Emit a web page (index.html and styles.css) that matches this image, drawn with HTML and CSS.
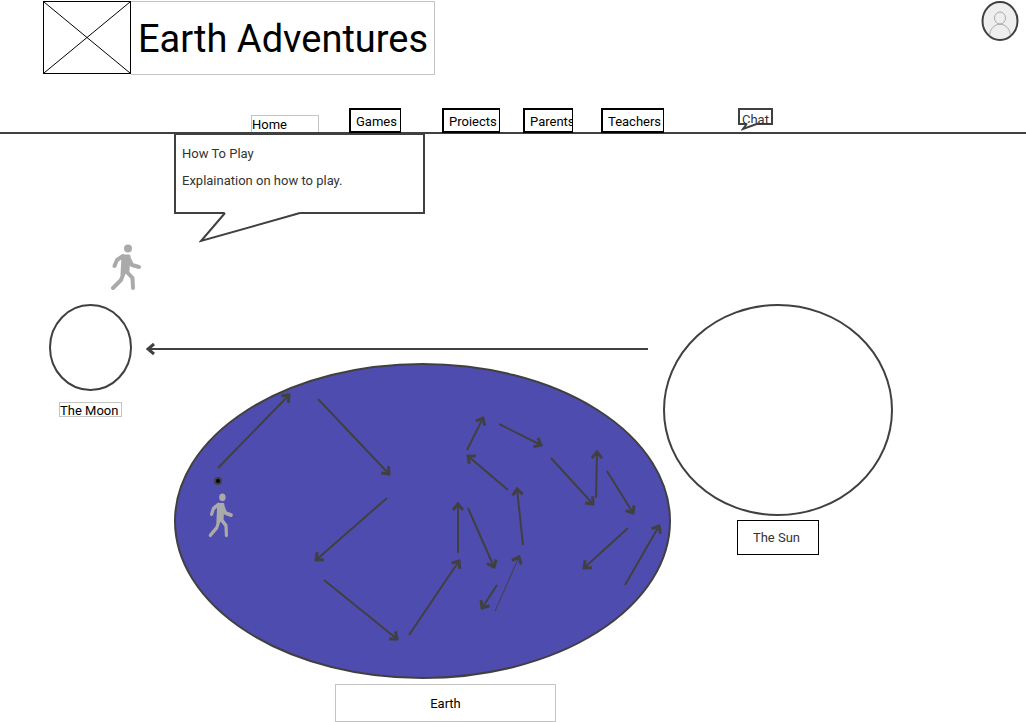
FILE: index.html
```html
<!DOCTYPE html>
<html lang="en">
<head>
<meta charset="utf-8">
<title>Earth Adventures</title>
<meta name="viewport" content="width=device-width, initial-scale=1">
<link rel="stylesheet" href="styles.css">
</head>
<body>
<header class="header">
  <div class="brand">
    <svg class="logo" viewBox="0 0 88 73" aria-hidden="true">
      <path d="M1 1L87 72M87 1L1 72"/>
      <rect x=".5" y=".5" width="87" height="72"/>
    </svg>
    <h1 class="title">Earth Adventures</h1>
  </div>
  <button class="avatar" type="button" aria-label="Account">
    <svg viewBox="0 0 38 40" aria-hidden="true">
      <defs><clipPath id="face"><ellipse cx="19" cy="20" rx="17" ry="18"/></clipPath></defs>
      <ellipse class="avatar-ring" cx="19" cy="20" rx="17.5" ry="19"/>
      <g class="avatar-person" clip-path="url(#face)">
        <ellipse cx="19" cy="17" rx="5.5" ry="6"/>
        <path d="M8.500 36C8.500 19 29.500 19 29.500 36"/>
      </g>
    </svg>
  </button>
</header>
<nav class="nav">
  <a class="home" href="#">Home</a>
  <a class="tab games" href="#"><span>Games</span></a>
  <a class="tab projects" href="#"><span>Projects</span></a>
  <a class="tab parents" href="#"><span>Parents</span></a>
  <a class="tab teachers" href="#"><span>Teachers</span></a>
  <a class="chat" href="#">Chat
    <svg class="chat-tail" viewBox="0 0 20 9" aria-hidden="true"><path class="fill" d="M6 1L2 7L17 1z"/><path class="stroke" d="M6 1.500L2 7L17 1.500"/></svg>
  </a>
</nav>
<main class="scene">
  <svg class="diagram" viewBox="0 134 1026 588" aria-hidden="true">
    <defs>
      <marker id="head" viewBox="-10 -7 12 14" markerWidth="12" markerHeight="14" markerUnits="userSpaceOnUse" orient="auto">
        <path class="head" d="M-6 -5L0 0L-6 5"/>
      </marker>
      <symbol id="walker" viewBox="0 0 32 48">
        <ellipse class="walker-head" cx="18" cy="4.500" rx="4" ry="4"/>
        <path d="M13 12L7 16L4.500 22M18 13L22 21L29 23M14 28L11 36L3 44M16 27L22.500 34L23 44"/>
        <path class="walker-body" d="M13 12L19 12L18 27L12 30z"/>
      </symbol>
    </defs>
    <ellipse class="outline" cx="90.500" cy="347.500" rx="40.500" ry="42.500"/>
    <ellipse class="outline" cx="778" cy="410" rx="114" ry="105"/>
    <ellipse class="outline earth" cx="422.500" cy="521" rx="247.500" ry="157"/>
    <g class="line arrows">
      <path d="M648 349H148"/>
      <path d="M218 468L289 395"/>
      <path d="M318 399L389 474"/>
      <path d="M387 498L316 560"/>
      <path d="M324 580L397 639"/>
      <path d="M409 635L459 561"/>
      <path d="M458 553V504"/>
      <path d="M468 508L494 567"/>
      <path d="M497 585L482 608"/>
      <path class="thin" d="M495 611L519 557"/>
      <path d="M523 545L517 489"/>
      <path d="M508 490L468 456"/>
      <path d="M467 450L483 418"/>
      <path d="M499 424L541 445"/>
      <path d="M551 458L593 504"/>
      <path d="M596 498L597 452"/>
      <path d="M607 471L633 513"/>
      <path d="M628 528L584 568"/>
      <path d="M625 585L659 526"/>
    </g>
    <circle class="dot" cx="218" cy="481" r="3"/>
    <use class="walker" href="#walker" x="110" y="244" width="32" height="48"/>
    <use class="walker" href="#walker" transform="translate(208 493) scale(.8 .96)" width="32" height="48"/>
  </svg>
  <section class="bubble">
    <p>How To Play</p>
    <p>Explaination on how to play.</p>
    <svg class="bubble-tail" viewBox="0 0 102 31" aria-hidden="true"><path class="fill" d="M26 0L2 29L102 0z"/><path class="line" d="M26 1L2 29L101 1"/></svg>
  </section>
  <div class="label moon">The Moon</div>
  <div class="label sun">The Sun</div>
  <div class="label earth-label">Earth</div>
</main>
</body>
</html>
```
FILE: styles.css
```css
* { box-sizing: border-box; }

body {
  margin: 0;
  background: #fff;
  color: #000;
  font: 13px/16px Roboto, "Liberation Sans", sans-serif;
}

a { color: inherit; text-decoration: none; }

.header {
  display: flex;
  justify-content: space-between;
  align-items: flex-start;
  padding: 1px 7px 0 43px;
}

.brand { display: flex; align-items: flex-start; }
.logo { width: 88px; height: 73px; fill: none; stroke: #000; }

.title {
  margin: 0;
  padding: 14px 6px 11px 7px;
  border: 1px solid #c4c4c4;
  border-left: 0;
  font-size: 38px;
  font-weight: 400;
  line-height: 47px;
}

.avatar { width: 38px; height: 40px; padding: 0; border: 0; background: none; }
.avatar svg { display: block; }
.avatar-ring { fill: #eee; stroke: #404040; stroke-width: 2; }
.avatar-person { fill: none; stroke: #aaa; }

.nav {
  display: flex;
  align-items: flex-start;
  height: 26px;
  margin-top: 33px;
  padding-left: 251px;
  border-bottom: 2px solid #404040;
}

.home {
  align-self: flex-end;
  width: 68px;
  height: 17px;
  margin-right: 30px;
  border: 1px solid #c4c4c4;
  border-bottom: 0;
  line-height: 18px;
}

.tab {
  height: 25px;
  padding: 4px 0 0 5px;
  border: 2px solid #000;
  border-right-width: 1px;
}

.tab span { display: block; }
.games { width: 52px; margin-right: 41px; }
.projects { width: 58px; margin-right: 23px; }
.projects span { height: 12px; overflow: hidden; }
.parents { width: 50px; margin-right: 28px; overflow: hidden; }
.teachers { width: 63px; margin-right: 74px; }

.chat {
  position: relative;
  width: 35px;
  height: 17px;
  padding-left: 2px;
  border: 2px solid #404040;
  color: #333;
  line-height: 19px;
}

.chat-tail { position: absolute; left: 1px; top: 12px; width: 20px; height: 9px; }
.fill { fill: #fff; }
.stroke { fill: none; stroke: #404040; stroke-width: 2; }

.scene { position: relative; min-height: 588px; }
.diagram { display: block; width: 1026px; height: 588px; }
.line { fill: none; stroke: #404040; stroke-width: 2; }
.head { fill: none; stroke: #404040; stroke-width: 3; }
.arrows path { marker-end: url("#head"); }
.thin { stroke-width: 1; }
.outline { fill: #fff; stroke: #404040; stroke-width: 2; }
.outline.earth { fill: #4f4caf; }
.dot { fill: #000; stroke: #404040; stroke-width: 2; }
.walker { fill: none; stroke: #aaa; stroke-width: 4; stroke-linecap: round; stroke-linejoin: round; }
.walker-head { fill: #aaa; stroke: none; }
.walker-body { fill: #aaa; stroke-width: 3; }

.bubble {
  position: absolute;
  left: 174px;
  top: 0;
  width: 251px;
  height: 80px;
  padding: 11px 6px;
  border: 2px solid #404040;
  border-top-width: 1px;
  background: #fff;
  color: #333;
}

.bubble p { margin: 0 0 11px; }
.bubble-tail { position: absolute; left: 23px; top: 77px; width: 102px; height: 31px; }

.label { position: absolute; border: 1px solid #c4c4c4; background: #fff; text-align: center; }
.moon { left: 59px; top: 268px; width: 63px; height: 15px; text-align: left; }
.sun { left: 737px; top: 386px; width: 82px; padding: 9px 0 8px; border-color: #000; color: #333; text-indent: -3px; }
.earth-label { left: 335px; top: 550px; width: 221px; padding: 11px 0 9px; }
```
